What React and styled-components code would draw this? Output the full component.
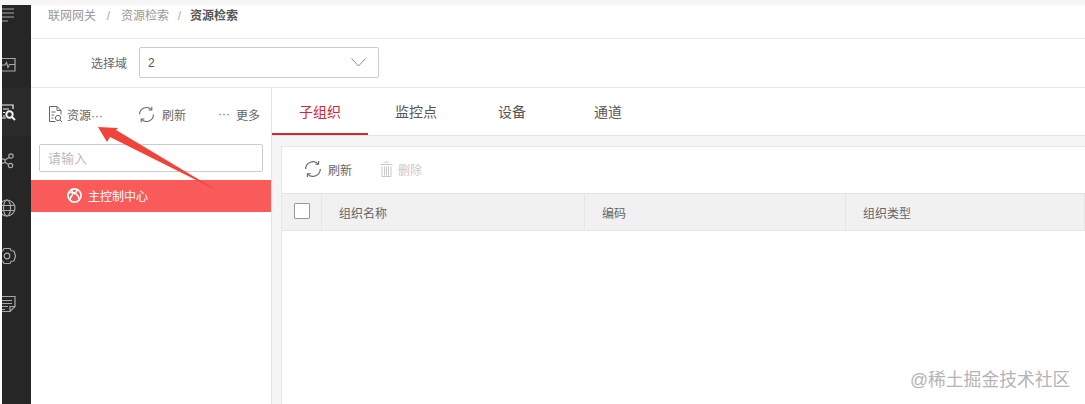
import React from "react";
import styled, { createGlobalStyle } from "styled-components";

const GlobalStyle = createGlobalStyle`
  html, body {
    margin: 0;
    padding: 0;
    height: 100%;
    overflow: hidden;
    background: #fff;
    font-family: "Liberation Sans", "Noto Sans CJK SC", sans-serif;
    font-size: 12px;
    color: #666;
  }
`;

const Page = styled.div`
  position: relative;
  width: 1085px;
  height: 404px;
  display: flex;
  flex-direction: column;
  overflow: hidden;
`;

const TopStrip = styled.div`
  height: 5px;
  flex: none;
  background: #f6f6f6;
`;

const Shell = styled.div`
  flex: 1;
  min-height: 0;
  display: flex;
  padding-left: 2px;
`;

const Sidebar = styled.nav`
  width: 29px;
  flex: none;
  background: #262626;
  overflow: hidden;
  display: flex;
  flex-direction: column;
`;

const NavItem = styled.div`
  height: ${(p) => p.$h || 48}px;
  flex: none;
  margin-left: -4px;
  display: flex;
  align-items: ${(p) => (p.$top ? "flex-start" : "center")};
  background: ${(p) => (p.$active ? "#2b2b2b" : "transparent")};
  color: ${(p) => (p.$active ? "#f2f2f2" : "#a8a8a8")};
  svg {
    width: 18px;
    height: 18px;
    display: block;
    flex: none;
    margin-top: ${(p) => p.$shift || 0}px;
    fill: none;
    stroke: currentColor;
    stroke-width: 1.2;
  }
`;

const Main = styled.main`
  flex: 1;
  min-width: 0;
  display: flex;
  flex-direction: column;
`;

const Breadcrumb = styled.div`
  height: 34px;
  flex: none;
  box-sizing: border-box;
  padding: 3px 0 0 17px;
  border-bottom: 1px solid #e8e8e8;
  display: flex;
  align-items: flex-start;
  line-height: 17px;
  color: #999;
`;

const Sep = styled.span`
  color: #aaa;
  width: ${(p) => p.$w}px;
  text-align: center;
`;

const Current = styled.span`
  color: #555;
  font-weight: 700;
`;

const FilterRow = styled.div`
  height: 49px;
  flex: none;
  box-sizing: border-box;
  border-bottom: 1px solid #e8e8e8;
  display: flex;
  align-items: center;
  padding-left: 60px;
  padding-bottom: 1px;
`;

const FilterLabel = styled.label`
  width: 36px;
  margin-right: 12px;
  white-space: nowrap;
`;

const Select = styled.div`
  width: 240px;
  height: 31px;
  box-sizing: border-box;
  border: 1px solid #ccc;
  border-radius: 2px;
  display: flex;
  align-items: center;
  justify-content: space-between;
  padding: 0 12px 0 8px;
  color: #555;
  svg {
    width: 15px;
    height: 9px;
    fill: none;
    stroke: #888;
    stroke-width: 1;
  }
`;

const Body = styled.div`
  flex: 1;
  min-height: 0;
  display: flex;
`;

const LeftPanel = styled.aside`
  width: 241px;
  flex: none;
  box-sizing: border-box;
  border-right: 1px solid #e4e4e4;
  display: flex;
  flex-direction: column;
`;

const PanelTools = styled.div`
  height: 56px;
  flex: none;
  display: grid;
  grid-template-columns: 90px 80px 1fr;
  align-items: center;
  padding: 0 0 4px 17px;
  box-sizing: border-box;
`;

const Tool = styled.div`
  display: flex;
  align-items: center;
  gap: ${(p) => p.$gap || 6}px;
  color: ${(p) => (p.$disabled ? "#c8c8c8" : "#666")};
  white-space: nowrap;
  svg {
    flex: none;
    fill: none;
    stroke: currentColor;
    stroke-width: 1;
  }
`;

const SearchInput = styled.input`
  display: block;
  width: 224px;
  height: 28px;
  flex: none;
  box-sizing: border-box;
  margin-left: 8px;
  border: 1px solid #ccc;
  border-radius: 2px;
  padding: 0 8px;
  font: inherit;
  font-size: 13px;
  outline: none;
  &::placeholder {
    color: #bbb;
  }
`;

const TreeRow = styled.div`
  height: 32px;
  flex: none;
  box-sizing: border-box;
  margin-top: 8px;
  background: #f95a5a;
  color: #fff;
  display: flex;
  align-items: center;
  gap: 6px;
  padding: 0 0 2px 36px;
  svg {
    fill: none;
    stroke: #fff;
    stroke-width: 1.6;
  }
`;

const RightPanel = styled.section`
  flex: 1;
  min-width: 0;
  display: flex;
  flex-direction: column;
  background: #f5f5f5;
`;

const Tabs = styled.div`
  height: 48px;
  flex: none;
  box-sizing: border-box;
  background: #fff;
  border-bottom: 1px solid #e4e4e4;
  display: flex;
`;

const Tab = styled.div`
  width: 96px;
  height: 47px;
  box-sizing: border-box;
  display: flex;
  align-items: center;
  justify-content: center;
  font-size: 14px;
  color: ${(p) => (p.$active ? "#d0282e" : "#555")};
  border-bottom: 2px solid ${(p) => (p.$active ? "#d0282e" : "transparent")};
`;

const Card = styled.div`
  flex: 1;
  margin: 10px 0 0 9px;
  background: #fff;
  border: 1px solid #e8e8e8;
  border-right: 0;
  border-bottom: 0;
  display: flex;
  flex-direction: column;
`;

const CardToolbar = styled.div`
  height: 46px;
  flex: none;
  box-sizing: border-box;
  display: flex;
  align-items: center;
  gap: 28px;
  padding: 0 0 2px 22px;
`;

const HeaderRow = styled.div`
  height: 38px;
  flex: none;
  box-sizing: border-box;
  background: #f1f1f1;
  border-top: 1px solid #e2e2e2;
  border-bottom: 1px solid #e6e6e6;
  display: grid;
  grid-template-columns: 40px 263px 261px 1fr;
`;

const HeaderCell = styled.div`
  display: flex;
  align-items: center;
  padding-left: ${(p) => (p.$check ? 12 : 17)}px;
  padding-top: ${(p) => (p.$check ? 0 : 1)}px;
  border-right: 1px solid #e6e6e6;
  color: #666;
`;

const CheckBox = styled.span`
  width: 16px;
  height: 16px;
  box-sizing: border-box;
  background: #fff;
  border: 1px solid #999;
  border-radius: 1px;
  margin-top: -2px;
`;

const Arrow = styled.svg`
  position: absolute;
  left: 95px;
  top: 122px;
  width: 130px;
  height: 76px;
`;

const Watermark = styled.div`
  position: absolute;
  left: 910px;
  top: 369px;
  font-size: 17.8px;
  line-height: 22px;
  color: #b4b4b4;
  white-space: nowrap;
`;

const RefreshIcon = ({ size = 16 }) => (
  <svg width={size} height={size} viewBox="0 0 16 16">
    <path d="M1.500 8a6.500 6.500 0 0 1 11.200-4.500M14.500 8a6.500 6.500 0 0 1-11.200 4.500" />
    <path d="M13 .8v3h-3M3 15.200v-3h3" />
  </svg>
);

const ResourceIcon = () => (
  <svg width="15" height="17" viewBox="0 0 15 17">
    <path d="M9 .5H1.500v15h6M9 .5l4 4v4M9 .5v4h4" />
    <path d="M3.500 6h4M3.500 9h2.500M3.500 12h2" />
    <circle cx="10" cy="12" r="2.600" />
    <path d="M12 14l2 2" />
  </svg>
);

const TrashIcon = () => (
  <svg width="13" height="16" viewBox="0 0 13 16">
    <path d="M.5 3.500h12M4.500 1.200h4M2 5.500v10h9v-10M4.500 5.500v9M6.500 5.500v9M8.500 5.500v9" />
  </svg>
);

const OrgIcon = () => (
  <svg width="15" height="15" viewBox="0 0 15 15">
    <circle cx="7.500" cy="7.500" r="6.600" />
    <path d="M1.500 5.200c3-1.700 6-.8 8.200 1.300s2.800 4.100 2.400 6M4 1.800c2.300 2 2.300 4 .6 6.200S2.800 11.500 3.300 12.700M10.400 1.700C9.500 3.500 8.600 4.800 7 6" />
  </svg>
);

function App() {
  return (
    <Page>
      <GlobalStyle />
      <TopStrip />
      <Shell>
        <Sidebar>
          <NavItem $h={17} $top>
            <svg viewBox="0 0 18 18">
              <path d="M0 4h16M0 8h16M0 12h16M0 16h10" />
            </svg>
          </NavItem>
          <NavItem $h={66} $shift={20}>
            <svg viewBox="0 0 18 18">
              <path d="M2 2.500h15v12.500H2z" />
              <path d="M2 9h5l1.500-2.500 1.500 5 1.500-3h5.500" />
            </svg>
          </NavItem>
          <NavItem $active>
            <svg viewBox="0 0 18 18">
              <path d="M15 6V2H2v13h6M5 6h6M5 9.500h2M5 13h2" />
              <circle cx="11.500" cy="11.500" r="3.200" strokeWidth="2" />
              <path d="M14 14l3 3" strokeWidth="2" />
            </svg>
          </NavItem>
          <NavItem>
            <svg viewBox="0 0 18 18">
              <circle cx="5" cy="10" r="2.200" />
              <circle cx="13" cy="5" r="2.200" />
              <circle cx="12.500" cy="14.500" r="2.200" />
              <path d="M7 9l4-2.500M7 11.200l3.600 2.200" />
            </svg>
          </NavItem>
          <NavItem>
            <svg viewBox="0 0 18 18">
              <circle cx="9" cy="9" r="8" />
              <ellipse cx="9" cy="9" rx="3.500" ry="8" />
              <path d="M1.500 6.500h15M1.500 11.500h15" />
            </svg>
          </NavItem>
          <NavItem>
            <svg viewBox="0 0 18 18">
              <path d="M6 1.500h6l1.200 2.300 2.800.2 1.500 5-1.500 5-2.800.2L12 16.500H6l-1.200-2.300-2.800-.2-1.500-5 1.500-5 2.800-.2z" />
              <circle cx="9" cy="9" r="2.800" />
            </svg>
          </NavItem>
          <NavItem>
            <svg viewBox="0 0 18 18">
              <path d="M1 1.500h16v10l-5 5H3" />
              <path d="M1 5.500h13M1 8.500h13M1 11.500h9M1 14.500h6M12 16.500v-5h5" />
            </svg>
          </NavItem>
        </Sidebar>
        <Main>
          <Breadcrumb>
            <span>联网网关</span>
            <Sep $w={25}>/</Sep>
            <span>资源检索</span>
            <Sep $w={21}>/</Sep>
            <Current>资源检索</Current>
          </Breadcrumb>
          <FilterRow>
            <FilterLabel>选择域</FilterLabel>
            <Select>
              <span>2</span>
              <svg viewBox="0 0 15 9">
                <path d="M.5.500l7 7.500 7-7.500" />
              </svg>
            </Select>
          </FilterRow>
          <Body>
            <LeftPanel>
              <PanelTools>
                <Tool $gap={4}>
                  <ResourceIcon />
                  <span>资源···</span>
                </Tool>
                <Tool $gap={7}>
                  <RefreshIcon size={17} />
                  <span>刷新</span>
                </Tool>
                <Tool $gap={6}>
                  <span>···</span>
                  <span>更多</span>
                </Tool>
              </PanelTools>
              <SearchInput placeholder="请输入" />
              <TreeRow>
                <OrgIcon />
                <span>主控制中心</span>
              </TreeRow>
            </LeftPanel>
            <RightPanel>
              <Tabs>
                <Tab $active>子组织</Tab>
                <Tab>监控点</Tab>
                <Tab>设备</Tab>
                <Tab>通道</Tab>
              </Tabs>
              <Card>
                <CardToolbar>
                  <Tool $gap={6}>
                    <RefreshIcon size={18} />
                    <span>刷新</span>
                  </Tool>
                  <Tool $disabled $gap={5}>
                    <TrashIcon />
                    <span>删除</span>
                  </Tool>
                </CardToolbar>
                <HeaderRow>
                  <HeaderCell $check>
                    <CheckBox />
                  </HeaderCell>
                  <HeaderCell>组织名称</HeaderCell>
                  <HeaderCell>编码</HeaderCell>
                  <HeaderCell>组织类型</HeaderCell>
                </HeaderRow>
              </Card>
            </RightPanel>
          </Body>
        </Main>
      </Shell>
      <Arrow viewBox="0 0 130 76">
        <path d="M3 5 L23 6 L21 8 L123 69 L15 15 L12 20 Z" fill="#f0433a" />
      </Arrow>
      <Watermark>@稀土掘金技术社区</Watermark>
    </Page>
  );
}

export default App;
